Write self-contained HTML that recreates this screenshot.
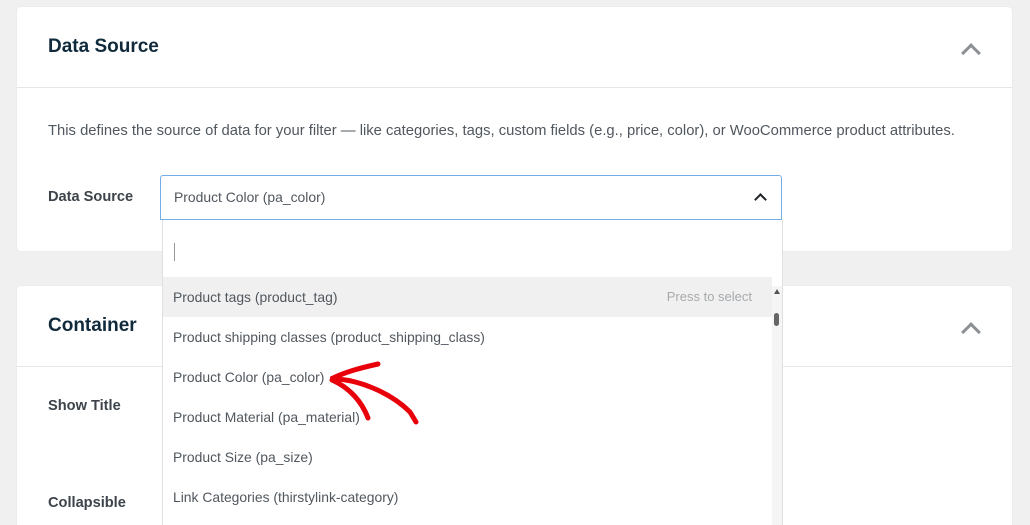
<!DOCTYPE html>
<html><head><style>
html,body{margin:0;width:1030px;height:525px;overflow:hidden}
body{background:#f0f0f1;font-family:"Liberation Sans",sans-serif;position:relative}
.card{position:absolute;left:17px;width:995px;background:#fff;border-radius:4px;box-shadow:0 0 1px rgba(0,0,0,.1)}
.h{position:absolute;left:31px;font-size:19px;font-weight:bold;color:#102a3c}
.div{position:absolute;left:0;right:0;height:1px;background:#e6e6e6}
.chev{position:absolute;left:947px;width:11px;height:11px;border-left:3px solid #8c8f94;border-top:3px solid #8c8f94;transform:rotate(45deg)}
.lab{position:absolute;left:48px;font-size:14.6px;font-weight:bold;color:#3c434a}
.item{position:absolute;left:0;width:599px;height:40px;line-height:40px;padding-left:10px;font-size:13.9px;color:#50575e}
</style></head><body>
<div class="card" style="top:7px;height:244px">
<div class="h" style="top:29px">Data Source</div>
<div class="chev" style="top:39px"></div>
<div class="div" style="top:80px"></div>
<div style="position:absolute;left:31px;top:116px;font-size:14.8px;color:#50575e">This defines the source of data for your filter — like categories, tags, custom fields (e.g., price, color), or WooCommerce product attributes.</div>
</div>
<div class="card" style="top:286px;height:260px">
<div class="h" style="top:29px">Container</div>
<div class="chev" style="top:39px"></div>
<div class="div" style="top:80px"></div>
</div>
<div class="lab" style="top:189px">Data Source</div>
<div class="lab" style="top:398px">Show Title</div>
<div class="lab" style="top:495px">Collapsible</div>
<div style="position:absolute;left:160px;top:175px;width:620px;height:43px;border:1px solid #72aee6;border-radius:3px 3px 0 0;background:#fff"></div>
<div style="position:absolute;left:174px;top:189px;font-size:13.9px;color:#50575e">Product Color (pa_color)</div>
<div style="position:absolute;left:756px;top:195px;width:7px;height:7px;border-left:2px solid #1d2327;border-top:2px solid #1d2327;transform:rotate(45deg)"></div>
<div style="position:absolute;left:162px;top:220px;width:619px;height:305px;background:#fff;border-left:1px solid #e0e0e0;border-right:1px solid #e0e0e0">
<div style="position:absolute;left:11px;top:23px;width:1px;height:18px;background:#999"></div>
<div class="item" style="top:57px;background:#f0f0f0">Product tags (product_tag)<span style="position:absolute;right:20px;color:#a7aaad;font-size:13px">Press to select</span></div>
<div class="item" style="top:97px">Product shipping classes (product_shipping_class)</div>
<div class="item" style="top:137px">Product Color (pa_color)</div>
<div class="item" style="top:177px">Product Material (pa_material)</div>
<div class="item" style="top:217px">Product Size (pa_size)</div>
<div class="item" style="top:257px">Link Categories (thirstylink-category)</div>
<div style="position:absolute;left:609px;top:66px;width:10px;height:239px;background:#f5f5f5"></div>
<div style="position:absolute;left:611px;top:93px;width:5px;height:13px;background:#666;border-radius:3px"></div>
<div style="position:absolute;left:611px;top:69px;width:0;height:0;border-left:3px solid transparent;border-right:3px solid transparent;border-bottom:5px solid #555"></div>
</div>
<svg width="1030" height="525" style="position:absolute;left:0;top:0">
<path d="M378 364 C360 368 345 372 331 379 C355 378 390 392 410 412 L416 422" stroke="#e8000b" stroke-width="5" fill="none" stroke-linecap="round"/>
<path d="M332 380 C350 388 362 402 368 418" stroke="#e8000b" stroke-width="5" fill="none" stroke-linecap="round"/>
</svg>
</body></html>
